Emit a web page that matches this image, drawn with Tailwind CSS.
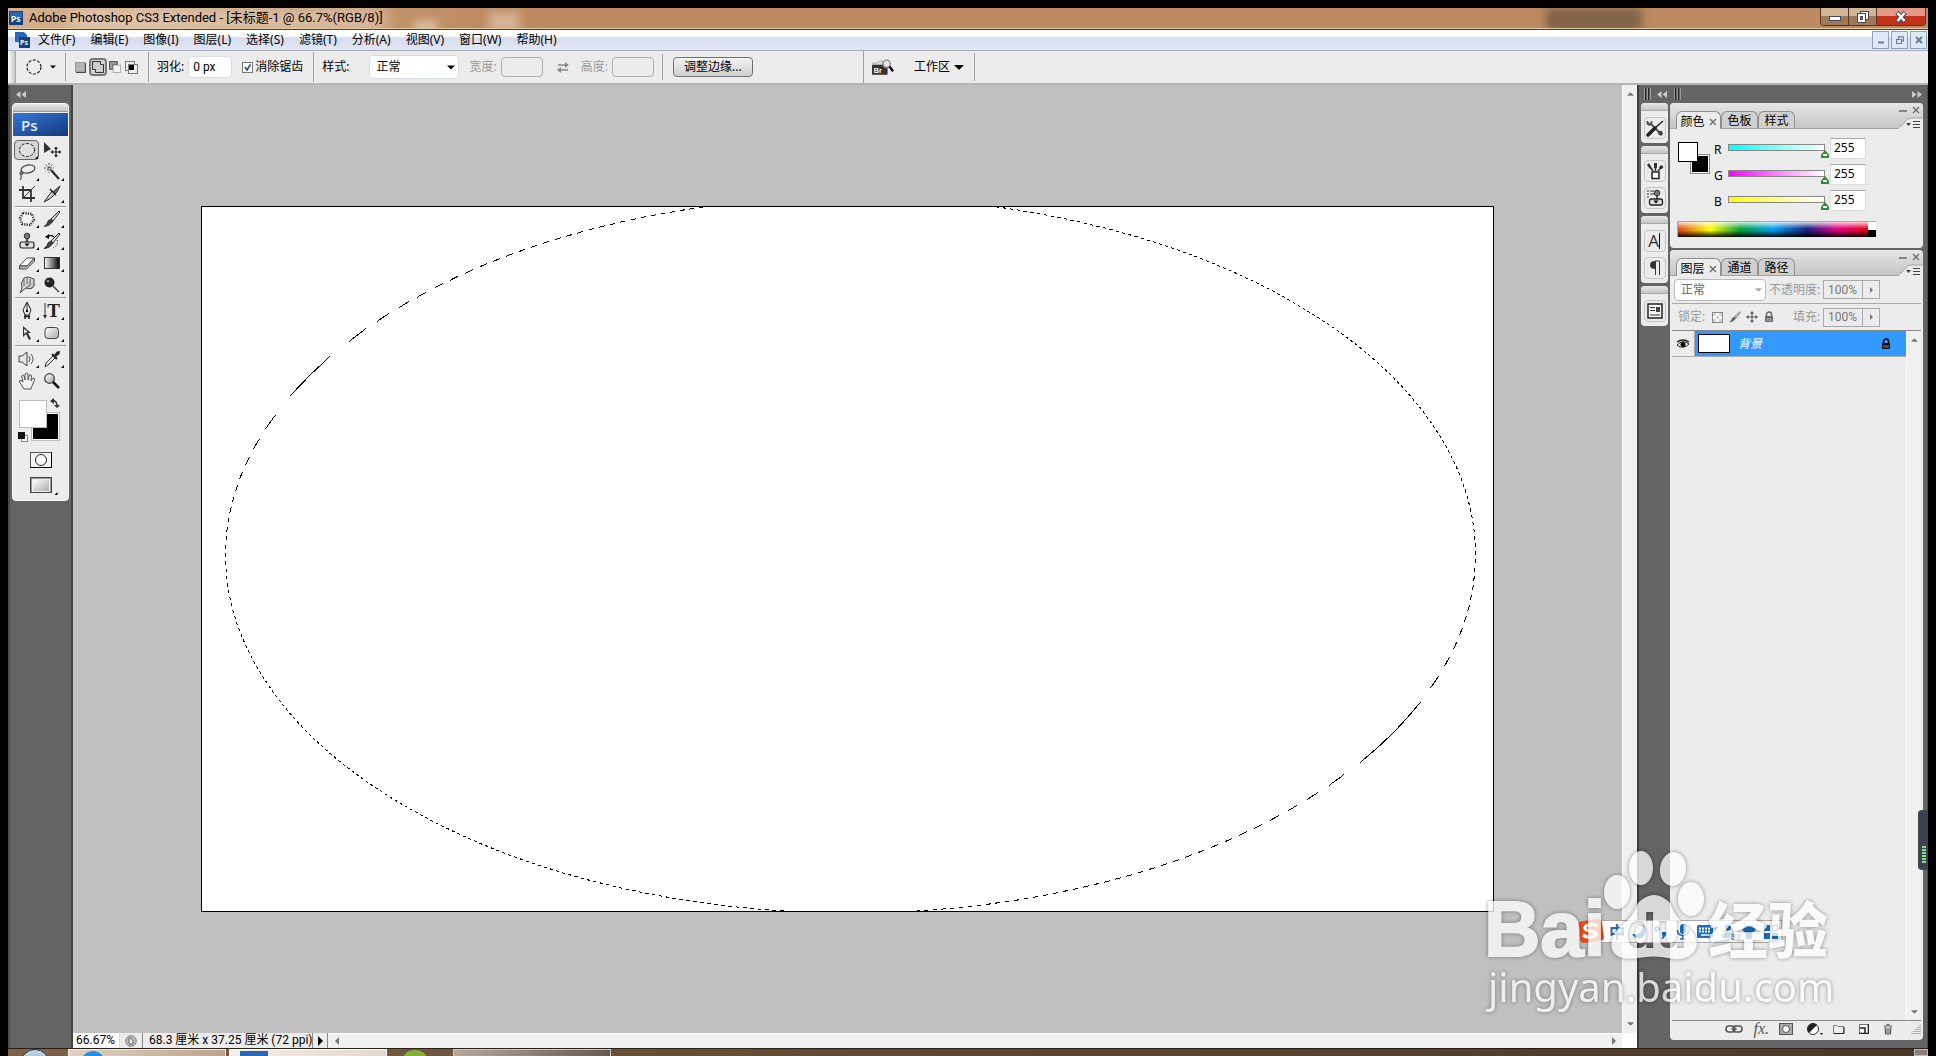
<!DOCTYPE html>
<html lang="zh-CN">
<head>
  <meta charset="UTF-8" />
  <meta name="viewport" content="width=device-width, initial-scale=1" />
  <title>Adobe Photoshop CS3 Extended</title>
  <script src="https://cdn.jsdelivr.net/npm/@tailwindcss/browser@4"></script>
</head>
<body class="bg-black h-screen overflow-hidden pt-2 pl-2 pr-2 flex flex-col relative text-[12px] leading-4 text-black font-['Noto_Sans','Noto_Sans_CJK_SC',sans-serif]">

  <!-- shared icons -->
  <svg class="absolute size-0">
    <symbol id="ps" viewBox="0 0 16 16">
      <rect width="16" height="16" fill="#15417f" />
      <rect x="1" y="1" width="14" height="7" fill="#2a66b4" />
      <text x="2" y="12" font-size="10" font-weight="bold" fill="#fff" font-family="Open Sans">Ps</text>
    </symbol>
    <symbol id="tri-up" viewBox="0 0 8 4"><path d="M0 4L4 0L8 4Z" /></symbol>
    <symbol id="tri-down" viewBox="0 0 8 4"><path d="M0 0L4 4L8 0Z" /></symbol>
    <symbol id="tri-left" viewBox="0 0 4 8"><path d="M4 0L0 4L4 8Z" /></symbol>
    <symbol id="tri-right" viewBox="0 0 4 8"><path d="M0 0L4 4L0 8Z" /></symbol>
    <symbol id="dbl-left" viewBox="0 0 10 7"><path d="M4.500 0L0 3.500L4.500 7ZM10 0L5.500 3.500L10 7Z" /></symbol>
    <symbol id="dbl-right" viewBox="0 0 10 7"><path d="M0 0L4.500 3.500L0 7ZM5.500 0L10 3.500L5.500 7Z" /></symbol>
    <symbol id="close" viewBox="0 0 8 8"><path d="M1 1L7 7M7 1L1 7" stroke="#666" stroke-width="1.200" fill="none" /></symbol>
    <symbol id="grip" viewBox="0 0 7 12"><path d="M1.500 0V12M4.500 0V12" stroke="#222" /><path d="M.5 0V12M3.500 0V12M6.500 0V12" stroke="#999" /></symbol>
    <symbol id="panel-menu" viewBox="0 0 24 12">
      <path d="M0 10C5 9 6 1 13 1H24V12H0Z" fill="#ececec" />
      <path d="M0 10C5 9 6 1 13 1H24" fill="none" stroke="#a5a5a5" />
      <path d="M7 6H12L9.500 9Z" fill="#444" />
      <path d="M14 4.500H21M14 7.500H21M14 10.500H21" stroke="#444" />
    </symbol>
    <symbol id="lock" viewBox="0 0 10 12"><path d="M2.500 5V3.500A2.500 2.500 0 0 1 7.500 3.500V5" fill="none" stroke="currentColor" stroke-width="1.500" /><rect x="1" y="5" width="8" height="6" rx="1" fill="currentColor" /><path d="M3 7V10M5 7V10M7 7V10" stroke="#fff" stroke-opacity=".6" /></symbol>
    <symbol id="brush" viewBox="0 0 18 18"><path d="M16 1L8 9L10 11L17 2Z" fill="#ddd" stroke="#222" /><path d="M8 9L10 11Q7 16 1 16.500Q5 14 5 11Z" fill="#444" stroke="#222" stroke-width=".8" /></symbol>
    <symbol id="stamp" viewBox="0 0 18 18"><circle cx="9" cy="4" r="2.800" fill="#777" stroke="#333" /><path d="M8 7H10L10.500 10H7.500Z" fill="#555" /><rect x="2" y="10" width="14" height="6" rx="2" fill="#e0e0e0" stroke="#222" stroke-width="1.200" /><path d="M6.500 11.500H11.500L9 14.500Z" fill="#000" /></symbol>
    <linearGradient id="metal" x1="0" y1="0" x2="1" y2="1"><stop offset="0" stop-color="#fff" /><stop offset="1" stop-color="#aaa" /></linearGradient>
    <linearGradient id="fade"><stop offset="0" stop-color="#fff" /><stop offset="1" stop-color="#000" /></linearGradient>
  </svg>

  <!-- title bar -->
  <header class="h-[21px] shrink-0 flex items-center pl-px bg-linear-to-r from-[#d3b08d] via-[#bd8b62] via-25% to-[#bd8b62] border-b border-[#e5c9a6] relative overflow-hidden">
    <div class="absolute left-[60px] top-0 w-80 h-6 rounded-full bg-[#eddbc8]/60 blur-sm"></div>
    <div class="absolute left-[406px] top-3 w-6 h-4 bg-[#e6cdb4]/70 blur-xs"></div>
    <div class="absolute left-[480px] top-1 w-8 h-5 bg-[#e6cdb4]/60 blur-xs"></div>
    <div class="absolute right-[286px] top-0 w-24 h-6 bg-[#806447] blur-xs"></div>
    <svg class="w-3.5 h-3.5 relative"><use href="#ps" /></svg>
    <h1 class="ml-1.5 text-[13px] font-['Roboto','Noto_Sans_CJK_SC',sans-serif] relative whitespace-nowrap">Adobe Photoshop CS3 Extended - [未标题-1 @ 66.7%(RGB/8)]</h1>
    <div class="ml-auto mr-0.5 self-start h-[18px] flex rounded-b border border-t-0 border-[#4f3a2c] overflow-hidden relative divide-x divide-[#4f3a2c]">
      <button aria-label="最小化" class="w-7 flex items-center justify-center bg-linear-to-b from-[#d3b596] from-50% to-[#a1795a] to-50%"><svg class="w-3 h-2" viewBox="0 0 12 8"><rect x=".5" y="3.500" width="11" height="4" fill="#fff" stroke="#444a5c" /></svg></button>
      <button aria-label="还原" class="w-7 flex items-center justify-center bg-linear-to-b from-[#d3b596] from-50% to-[#a1795a] to-50%"><svg class="w-3 h-3" viewBox="0 0 12 12"><rect x="3.500" y=".5" width="8" height="8" fill="#fff" stroke="#444a5c" /><rect x=".5" y="2.500" width="8" height="9" fill="#fff" stroke="#444a5c" /><rect x="3.500" y="5.500" width="2" height="3" fill="#a1795a" stroke="#444a5c" /></svg></button>
      <button aria-label="关闭" class="w-12 flex items-center justify-center bg-linear-to-b from-[#e29a86] from-50% to-[#c0321a] to-50%"><svg class="w-3 h-3" viewBox="0 0 12 12"><path d="M2 1.500L10 10.500M10 1.500L2 10.500" stroke="#444a5c" stroke-width="4.500" /><path d="M2.500 2L9.500 10M9.500 2L2.500 10" stroke="#fff" stroke-width="2.500" /></svg></button>
    </div>
  </header>

  <!-- menu bar -->
  <nav class="h-[21px] shrink-0 flex items-center gap-[15px] pl-[30px] relative border-t border-[#4b4038] bg-linear-to-b from-white from-30% via-[#d5dcee] via-40% to-[#e2e8f5] text-[12px] whitespace-nowrap">
    <svg class="absolute left-1.5 top-0.5 w-[17px] h-4" viewBox="0 0 17 16"><path d="M1 0H10L13 3V10H1Z" fill="#2a66b4" /><rect x="5" y="5" width="11" height="11" fill="#15417f" /><text x="6" y="13" font-size="7" font-weight="bold" fill="#fff" font-family="Open Sans">Ps</text></svg>
    <a href="#">文件(F)</a>
    <a href="#">编辑(E)</a>
    <a href="#">图像(I)</a>
    <a href="#">图层(L)</a>
    <a href="#">选择(S)</a>
    <a href="#">滤镜(T)</a>
    <a href="#">分析(A)</a>
    <a href="#">视图(V)</a>
    <a href="#">窗口(W)</a>
    <a href="#">帮助(H)</a>
    <div class="ml-auto mr-px flex gap-0.5">
      <button aria-label="最小化文档" class="w-[17px] h-[18px] border border-[#8ba2bd] bg-[#dde9f6] flex items-center justify-center"><svg class="w-2 h-2" viewBox="0 0 8 8"><path d="M1 6.500H7" stroke="#6b7c92" stroke-width="2" /></svg></button>
      <button aria-label="还原文档" class="w-[17px] h-[18px] border border-[#8ba2bd] bg-[#dde9f6] flex items-center justify-center"><svg class="w-2 h-2" viewBox="0 0 8 8"><path d="M2.500 3V.8H7.500V5H6M.5 3.500H5.500V7.500H.5Z" fill="none" stroke="#6b7c92" stroke-width="1.200" /></svg></button>
      <button aria-label="关闭文档" class="w-[17px] h-[18px] border border-[#8ba2bd] bg-[#dde9f6] flex items-center justify-center"><svg class="w-2 h-2" viewBox="0 0 8 8"><path d="M1 1L7 7M7 1L1 7" stroke="#6b7c92" stroke-width="2" /></svg></button>
    </div>
  </nav>

  <!-- options bar -->
  <section class="h-[35px] shrink-0 flex items-center bg-[#ececec] border-t border-b-2 border-t-[#a9adb8] border-b-[#b4b4b4] whitespace-nowrap">
    <div class="w-2 self-stretch bg-linear-to-r from-white to-[#c8c8c8] border-r border-[#aaa]"></div>
    <button aria-label="椭圆选框工具" class="w-[50px] h-7 border-r border-[#a0a0a0] flex items-center pl-2.5">
      <svg class="w-4 h-4" viewBox="0 0 16 16"><circle cx="8" cy="8" r="7" fill="none" stroke="#222" stroke-width="1.200" stroke-dasharray="3 1.500" /></svg>
      <svg class="w-1.5 h-1 ml-2"><use href="#tri-down" /></svg>
    </button>
    <div class="w-[83px] h-[30px] border-r border-[#a0a0a0] flex items-center pl-2">
      <button aria-label="新选区" class="w-[15px]"><svg class="w-[11px] h-[11px] ml-px" viewBox="0 0 12 12"><rect x=".5" y=".5" width="10" height="10" fill="#b5b5b5" stroke="#999" /><path d="M11.500 1V11.500H1" fill="none" stroke="#333" /></svg></button>
      <button aria-label="添加到选区" class="w-[18px] h-[18px] rounded border-2 border-[#777] bg-[#d5d5d5] flex items-center justify-center"><svg class="w-3 h-3" viewBox="0 0 12 12"><path d="M.5 .5H8.500V3.500H11.500V11.500H3.500V8.500H.5Z" fill="#ccc" stroke="#333" /></svg></button>
      <button aria-label="从选区减去" class="w-4"><svg class="w-3 h-3 ml-0.5" viewBox="0 0 13 13"><path d="M.5 .5H9V4H4V9H.5Z" fill="#999" stroke="#444" /><rect x="4.500" y="4.500" width="8" height="8" fill="#f4f4f4" stroke="#aaa" /></svg></button>
      <button aria-label="与选区交叉" class="w-4"><svg class="w-[13px] h-[13px] ml-0.5" viewBox="0 0 13 13"><rect x=".5" y=".5" width="9" height="9" fill="#eee" stroke="#777" /><rect x="3.500" y="3.500" width="9" height="9" fill="#eee" stroke="#777" /><rect x="4" y="4" width="5" height="5" fill="#000" /></svg></button>
    </div>
    <label for="feather" class="ml-2">羽化:</label>
    <input id="feather" value="0 px" class="ml-1 w-11 h-[22px] bg-white border border-[#d8dce4] px-1 rounded-sm font-['Roboto',sans-serif]" />
    <input id="antialias" type="checkbox" checked class="peer sr-only" />
    <label for="antialias" class="ml-2.5 flex items-center gap-0.5">
      <svg class="w-[11px] h-[11px]" viewBox="0 0 11 11"><rect x=".5" y=".5" width="10" height="10" fill="#fff" stroke="#777" /><path d="M3 5L5 8L8.500 2.500" fill="none" stroke="#2a4b94" stroke-width="1.600" /></svg>消除锯齿
    </label>
    <div class="ml-2.5 h-[30px] border-l border-[#a0a0a0]"></div>
    <label for="style" class="ml-2">样式:</label>
    <div class="relative ml-5">
      <select id="style" class="appearance-none w-[90px] h-6 bg-white border border-[#d8dce4] rounded-sm px-1.5"><option>正常</option></select>
      <svg class="absolute right-1 top-2.5 w-2 h-[5px] pointer-events-none" preserveAspectRatio="none"><use href="#tri-down" /></svg>
    </div>
    <label for="sel-width" class="ml-2.5 text-[#9b9b9b]">宽度:</label>
    <input id="sel-width" disabled class="ml-1 w-[42px] h-5 border border-[#b0b0b0] rounded-sm bg-[#ececec]" />
    <svg class="w-3 h-3 ml-3.5" viewBox="0 0 12 12"><path d="M1 4H9M3 9H11" stroke="#888" stroke-width="1.500" /><path d="M8 1L12 4L8 7ZM4 6L0 9L4 12Z" fill="#888" /></svg>
    <label for="sel-height" class="ml-3 text-[#9b9b9b]">高度:</label>
    <input id="sel-height" disabled class="ml-1 w-[42px] h-5 border border-[#b0b0b0] rounded-sm bg-[#ececec]" />
    <div class="ml-2 h-[26px] border-l border-[#a0a0a0]"></div>
    <button class="ml-2.5 w-20 h-5 rounded-sm border border-[#707070] bg-linear-to-b from-[#f4f4f4] to-[#cfcfcf] leading-4">调整边缘...</button>
    <div class="ml-[110px] self-stretch border-l border-[#a0a0a0]"></div>
    <button aria-label="转到 Bridge" class="ml-2"><svg class="w-[22px] h-[17px]" viewBox="0 0 24 18"><path d="M1 4H6L8 2H12V7H1Z" fill="#ddd" stroke="#999" stroke-width=".8" /><rect y="6" width="17" height="11" rx="1" fill="#333" /><text x="2" y="15" font-size="8" font-weight="bold" fill="#fff" font-family="Liberation Sans">Br</text><circle cx="16" cy="5" r="4" fill="#e6e6e6" stroke="#888" stroke-width="1.500" /><path d="M19 8L23 13" stroke="#000" stroke-width="2.500" /></svg></button>
    <button class="ml-5 flex items-center gap-1">工作区<svg class="w-2.5 h-[5px]"><use href="#tri-down" /></svg></button>
    <div class="ml-2.5 h-[28px] border-l border-[#a0a0a0]"></div>
  </section>

  <main class="flex-1 min-h-0 flex bg-[#646464]">

    <!-- tool box -->
    <aside class="w-[65px] shrink-0 border-2 border-y-0 border-[#4a4a4a] border-r-[#444] pl-0.5 pr-0.5 flex flex-col">
      <div class="h-[18px] flex items-center pl-1"><svg class="w-2.5 h-[7px] fill-[#ccc]"><use href="#dbl-left" /></svg></div>
      <div class="w-[57px] bg-[#ececec] rounded-sm border border-[#f8f8f8] h-[398px] flex flex-col">
        <div class="h-2 bg-linear-to-b from-[#e8e8e8] to-[#c4c4c4] border-b border-[#999]"></div>
        <div class="mt-px h-[23px] bg-linear-to-br from-[#3877dc] to-[#123a78] text-[#e8f0fc] text-[15px] leading-6 font-semibold pl-2 font-['Open_Sans',sans-serif]">Ps</div>
        <div class="mt-[3px] ml-px grid grid-cols-[25px_25px] auto-rows-[22px]">
          <button aria-label="椭圆选框" class="relative flex items-center justify-center h-5 mt-px rounded border border-[#666] bg-[#d4d4d4]"><svg class="w-4 h-4" viewBox="0 0 16 16"><ellipse cx="8" cy="8" rx="7.500" ry="6.500" fill="#e2e2e2" stroke="#222" stroke-dasharray="3 1.500" /></svg><i class="absolute right-0 bottom-0 size-[3px] bg-black [clip-path:polygon(100%_0,100%_100%,0_100%)]"></i></button>
          <button aria-label="移动" class="flex items-center justify-center"><svg class="w-[18px] h-[18px]" viewBox="0 0 18 18"><path d="M1 1V12L8 8Z" fill="#333" /><path d="M13 6V16M8 11H18" stroke="#222" stroke-width="1.200" /><path d="M11 8L13 5.500L15 8ZM11 14L13 16.500L15 14ZM10 9L7.500 11L10 13ZM16 9L18 11L16 13Z" fill="#222" /></svg></button>
          <button aria-label="套索" class="relative flex items-center justify-center"><svg class="w-[18px] h-[18px]" viewBox="0 0 18 18"><ellipse cx="10" cy="6" rx="7" ry="4" fill="none" stroke="#444" stroke-width="1.200" transform="rotate(-12 10 6)" /><path d="M4 8Q1 9 2 11Q5 13 5 10Q2 9 3 13Q4 15 2 17" fill="none" stroke="#333" /></svg><i class="absolute right-0 bottom-0.5 size-[3px] bg-black [clip-path:polygon(100%_0,100%_100%,0_100%)]"></i></button>
          <button aria-label="魔棒" class="relative flex items-center justify-center"><svg class="w-[18px] h-[18px]" viewBox="0 0 18 18"><path d="M6 0V10M1 5H11M2.500 1.500L9.500 8.500M9.500 1.500L2.500 8.500" stroke="#555" stroke-dasharray="2 1" /><path d="M8 7L16 16" stroke="#222" stroke-width="2" /></svg><i class="absolute right-0 bottom-0.5 size-[3px] bg-black [clip-path:polygon(100%_0,100%_100%,0_100%)]"></i></button>
          <button aria-label="裁剪" class="flex items-center justify-center"><svg class="w-[18px] h-[18px]" viewBox="0 0 18 18"><path d="M5 1V13H17M1 5H13V17" fill="none" stroke="#333" stroke-width="1.800" /><path d="M6 12L17 1" stroke="#333" /></svg></button>
          <button aria-label="切片" class="relative flex items-center justify-center"><svg class="w-[18px] h-[18px]" viewBox="0 0 18 18"><path d="M10 7L17 1L14 7L12 9Z" fill="#777" stroke="#222" /><path d="M1 17L9 6L12 9Q8 14 1 17Z" fill="#ccc" stroke="#222" /><path d="M7 4L13 10" stroke="#222" stroke-width="1.500" /></svg><i class="absolute right-0 bottom-0.5 size-[3px] bg-black [clip-path:polygon(100%_0,100%_100%,0_100%)]"></i></button>
        </div>
        <hr class="h-0.5 mx-0.5 mt-px border-0 border-t border-[#999] bg-white" />
        <div class="ml-px grid grid-cols-[25px_25px] auto-rows-[22px]">
          <button aria-label="修补" class="relative flex items-center justify-center"><svg class="w-[18px] h-[18px]" viewBox="0 0 18 18"><path d="M5 3L14 4L16 10L12 15L4 14L2 8Z" fill="#f4f4f4" stroke="#333" stroke-width="2.500" stroke-dasharray="1.200 1.200" /></svg><i class="absolute right-0 bottom-0.5 size-[3px] bg-black [clip-path:polygon(100%_0,100%_100%,0_100%)]"></i></button>
          <button aria-label="画笔" class="relative flex items-center justify-center"><svg class="w-[18px] h-[18px]"><use href="#brush" /></svg><i class="absolute right-0 bottom-0.5 size-[3px] bg-black [clip-path:polygon(100%_0,100%_100%,0_100%)]"></i></button>
          <button aria-label="仿制图章" class="relative flex items-center justify-center"><svg class="w-[18px] h-[18px]"><use href="#stamp" /></svg><i class="absolute right-0 bottom-0.5 size-[3px] bg-black [clip-path:polygon(100%_0,100%_100%,0_100%)]"></i></button>
          <button aria-label="历史记录画笔" class="relative flex items-center justify-center"><svg class="w-[18px] h-[18px]" viewBox="0 0 18 18"><path d="M16 1L8 9L10 11L17 2Z" fill="#ddd" stroke="#222" /><path d="M8 9L10 11Q7 16 1 16.500Q5 14 5 11Z" fill="#444" stroke="#222" /><path d="M4 5Q8 2 11 5" fill="none" stroke="#111" stroke-width="1.500" /><path d="M2 5L6 2V7Z" /><path d="M14 8Q16 13 10 16" fill="none" stroke="#333" stroke-dasharray="1.500 1.500" /></svg><i class="absolute right-0 bottom-0.5 size-[3px] bg-black [clip-path:polygon(100%_0,100%_100%,0_100%)]"></i></button>
          <button aria-label="橡皮擦" class="relative flex items-center justify-center"><svg class="w-[18px] h-[18px]" viewBox="0 0 18 18"><path d="M1.500 12L9 4H16.500L9 12Z" fill="#fff" stroke="#444" /><path d="M1.500 12V15H8.500L16.500 7V4L9 12Z" fill="#bbb" stroke="#444" /></svg><i class="absolute right-0 bottom-0.5 size-[3px] bg-black [clip-path:polygon(100%_0,100%_100%,0_100%)]"></i></button>
          <button aria-label="渐变" class="relative flex items-center justify-center"><svg class="w-4 h-3" viewBox="0 0 16 12"><rect x=".5" y=".5" width="15" height="11" fill="url(#fade)" stroke="#333" /></svg><i class="absolute right-0 bottom-0.5 size-[3px] bg-black [clip-path:polygon(100%_0,100%_100%,0_100%)]"></i></button>
          <button aria-label="涂抹" class="relative flex items-center justify-center"><svg class="w-[18px] h-[18px]" viewBox="0 0 18 18"><path d="M2 17L4 12Q2 7 6 2L10 1L16 3V10Q14 14 8 12L4 15Z" fill="url(#metal)" stroke="#444" /><path d="M6 3V10M9 2V8M12 3V9L8 12" fill="none" stroke="#555" /></svg><i class="absolute right-0 bottom-0.5 size-[3px] bg-black [clip-path:polygon(100%_0,100%_100%,0_100%)]"></i></button>
          <button aria-label="加深" class="relative flex items-center justify-center"><svg class="w-[18px] h-[18px]" viewBox="0 0 18 18"><circle cx="6.500" cy="6.500" r="5" fill="#222" /><circle cx="5" cy="5" r="1.500" fill="#888" /><path d="M10 10L16 16" stroke="#444" stroke-width="1.500" /></svg><i class="absolute right-0 bottom-0.5 size-[3px] bg-black [clip-path:polygon(100%_0,100%_100%,0_100%)]"></i></button>
        </div>
        <hr class="h-0.5 mx-0.5 my-px border-0 border-t border-[#999] bg-white" />
        <div class="ml-px grid grid-cols-[25px_25px] auto-rows-[22px]">
          <button aria-label="钢笔" class="relative flex items-center justify-center"><svg class="w-[18px] h-[18px]" viewBox="0 0 18 18"><path d="M9 0L13 8L11 13H7L5 8Z" fill="#f0f0f0" stroke="#222" /><path d="M9 1V8" stroke="#222" /><circle cx="9" cy="9" r="1.200" /><path d="M6 14.500H12M7 13V17M11 13V17" stroke="#222" stroke-width="1.500" /></svg><i class="absolute right-0 bottom-0.5 size-[3px] bg-black [clip-path:polygon(100%_0,100%_100%,0_100%)]"></i></button>
          <button aria-label="直排文字" class="relative flex items-center justify-center text-[19px] font-['Liberation_Serif',serif] font-bold text-[#222]"><svg class="w-1 h-4" viewBox="0 0 4 16"><path d="M2 0V14" stroke="#333" /><path d="M0 12H4L2 16Z" fill="#333" /></svg>T<i class="absolute right-0 bottom-0.5 size-[3px] bg-black [clip-path:polygon(100%_0,100%_100%,0_100%)]"></i></button>
          <button aria-label="路径选择" class="relative flex items-center justify-center"><svg class="w-[18px] h-[18px]" viewBox="0 0 18 18"><path d="M5 2V13L8 10L11 16L13 15L10 9H13Z" fill="#333" /><path d="M6 5V10L8 8L9 9V7Z" fill="#eee" /></svg><i class="absolute right-0 bottom-0.5 size-[3px] bg-black [clip-path:polygon(100%_0,100%_100%,0_100%)]"></i></button>
          <button aria-label="圆角矩形" class="relative flex items-center justify-center"><svg class="w-4 h-3" viewBox="0 0 16 12"><rect x="1" y=".5" width="13.500" height="11" rx="3" fill="url(#metal)" stroke="#444" /></svg><i class="absolute right-0 bottom-0.5 size-[3px] bg-black [clip-path:polygon(100%_0,100%_100%,0_100%)]"></i></button>
        </div>
        <hr class="h-0.5 mx-0.5 my-px border-0 border-t border-[#999] bg-white" />
        <div class="ml-px grid grid-cols-[25px_25px] auto-rows-[22px]">
          <button aria-label="语音注释" class="relative flex items-center justify-center"><svg class="w-[18px] h-[18px]" viewBox="0 0 18 18"><path d="M1 6H4L9 2V16L4 12H1Z" fill="#e6e6e6" stroke="#444" /><path d="M11 6Q13 9 11 12M13 4Q17 9 13 14" fill="none" stroke="#555" /></svg><i class="absolute right-0 bottom-0.5 size-[3px] bg-black [clip-path:polygon(100%_0,100%_100%,0_100%)]"></i></button>
          <button aria-label="吸管" class="relative flex items-center justify-center"><svg class="w-[18px] h-[18px]" viewBox="0 0 18 18"><path d="M2 17L3 13L10 6L12 8L5 15Z" fill="#eee" stroke="#333" /><path d="M9 4L14 9" stroke="#222" stroke-width="2" /><path d="M11 5L14 1.500L17 1L16.500 4L13 7Z" fill="#222" /></svg><i class="absolute right-0 bottom-0.5 size-[3px] bg-black [clip-path:polygon(100%_0,100%_100%,0_100%)]"></i></button>
          <button aria-label="抓手" class="flex items-center justify-center"><svg class="w-[18px] h-[18px]" viewBox="0 0 18 18"><path d="M6 17L1.500 10Q1 8 3 8.500L5 10L3.500 4Q4.500 2 6 4L7 8V2Q8.500 0 10 2V8L11.500 3Q13 2 13.500 4L13 9L15 6Q17 6 16.500 8L14 14L13 17Z" fill="#f2f2f2" stroke="#555" /></svg></button>
          <button aria-label="缩放" class="flex items-center justify-center"><svg class="w-[18px] h-[18px]" viewBox="0 0 18 18"><circle cx="6.500" cy="6.500" r="4.800" fill="url(#metal)" stroke="#444" stroke-width="1.300" /><path d="M10 10L16 16" stroke="#111" stroke-width="2.500" /></svg></button>
        </div>
        <div class="relative h-[50px] mt-1">
          <button aria-label="背景色" class="absolute left-[18px] top-4 size-[29px] bg-black border border-[#bbb] outline outline-white -outline-offset-2"></button>
          <button aria-label="前景色" class="absolute left-1.5 top-1 size-7 bg-white border border-[#bbb]"></button>
          <svg class="absolute left-[37px] top-0.5 w-2.5 h-2.5" viewBox="0 0 10 10"><path d="M2 3Q7 2 7 8" fill="none" stroke="#333" stroke-width="1.500" /><path d="M0 3L4 0V6ZM4 7H10L7 10Z" fill="#333" /></svg>
          <svg class="absolute left-[5px] top-9 w-2.5 h-2.5" viewBox="0 0 10 10"><rect x="3.500" y="3.500" width="6" height="6" fill="#fff" stroke="#888" /><rect width="7" height="7" fill="#111" /></svg>
        </div>
        <div class="flex flex-col items-center mt-1.5 gap-[9px]">
          <button aria-label="快速蒙版" class="w-[22px] h-4"><svg class="w-[22px] h-4" viewBox="0 0 22 16"><rect x=".5" y=".5" width="21" height="15" fill="#f4f4f4" stroke="#555" /><path d="M21.500 0V15.500H0" fill="none" stroke="#000" /><circle cx="11" cy="8" r="5.500" fill="#fff" stroke="#222" /></svg></button>
          <button aria-label="屏幕模式" class="relative w-[22px] h-4"><svg class="w-[22px] h-4" viewBox="0 0 22 16"><rect x=".5" y=".5" width="21" height="15" fill="#999" stroke="#444" /><rect x="2.500" y="2.500" width="17" height="12" fill="url(#metal)" stroke="#eee" /></svg><i class="absolute -right-1.5 -bottom-0.5 size-[3px] bg-black [clip-path:polygon(100%_0,100%_100%,0_100%)]"></i></button>
        </div>
      </div>
    </aside>

    <!-- document window -->
    <section class="flex-1 min-w-0 flex flex-col">
      <div class="flex-1 min-h-0 flex">
        <div class="flex-1 min-w-0 bg-[#c0c0c0] flex items-center justify-center overflow-hidden">
          <svg class="w-[1293px] max-w-full h-auto" viewBox="201 206 1293 706">
            <defs>
              <linearGradient id="ants" gradientUnits="userSpaceOnUse" spreadMethod="repeat" x1="1.250" y1="1.250" x2="5.250" y2="5.250">
                <stop offset=".5" stop-color="#000" />
                <stop offset=".5" stop-color="#fff" />
              </linearGradient>
            </defs>
            <rect x="201" y="206" width="1293" height="706" fill="#fff" />
            <ellipse cx="850.500" cy="555" rx="625" ry="358" fill="none" stroke="url(#ants)" stroke-width="1" shape-rendering="crispEdges" />
            <rect x="201.500" y="206.500" width="1292" height="705" fill="none" stroke="#000" />
          </svg>
        </div>
        <div class="w-[15px] bg-[#f0f0f0] border-l border-white flex flex-col justify-between items-center py-[7px]">
          <svg class="w-[7px] h-1 fill-[#777]"><use href="#tri-up" /></svg>
          <svg class="w-[7px] h-1 fill-[#777]"><use href="#tri-down" /></svg>
        </div>
      </div>
      <div class="h-[15px] shrink-0 flex items-stretch bg-[#ececec] leading-[15px] whitespace-nowrap font-['Roboto','Noto_Sans_CJK_SC',sans-serif] text-[12px]">
        <input aria-label="缩放比例" value="66.67%" class="w-[47px] bg-white pl-[3px] border-r border-[#ddd]" />
        <div class="w-[23px] flex items-center justify-center border-r border-[#888]"><svg class="w-3 h-3" viewBox="0 0 12 12"><circle cx="6" cy="6" r="5.300" fill="#bbb" stroke="#888" /><path d="M4 3V9H8V6L6 3Z" fill="#eee" stroke="#666" /></svg></div>
        <div class="w-[170px] pl-1.5 border-r border-[#888]">68.3 厘米 x 37.25 厘米 (72 ppi)</div>
        <button aria-label="状态栏菜单" class="w-[15px] flex items-center justify-center border-r border-[#888]"><svg class="w-[5px] h-2.5" viewBox="0 0 5 10"><path d="M0 0L5 5L0 10Z" /></svg></button>
        <div class="flex-1 bg-[#f0f0f0] border-t border-white flex items-center justify-between pl-[7px] pr-1.5">
          <svg class="w-1 h-2 fill-[#777]"><use href="#tri-left" /></svg>
          <svg class="w-1 h-2 fill-[#777]"><use href="#tri-right" /></svg>
        </div>
        <div class="w-[15px] bg-white"></div>
      </div>
    </section>

    <!-- collapsed panels -->
    <aside class="w-[33px] shrink-0 border-l-2 border-[#3c3c3c] flex flex-col pl-0.5">
      <div class="h-[18px] flex items-center gap-1.5 pl-[3px]">
        <svg class="w-[7px] h-3"><use href="#grip" /></svg>
        <svg class="w-2.5 h-[7px] fill-[#ccc]"><use href="#dbl-left" /></svg>
      </div>
      <div class="flex flex-col gap-[3px] w-[27px]">
        <div class="bg-[#ececec] rounded-sm pb-1 flex flex-col items-center">
          <div class="h-2 w-full rounded-t-sm bg-linear-to-b from-[#e8e8e8] to-[#c4c4c4] border-b border-[#aaa] mb-1.5"></div>
          <button aria-label="工具预设" class="size-[22px] rounded border border-[#c4c4c4] flex items-center justify-center"><svg class="w-[18px] h-[18px]" viewBox="0 0 18 18"><path d="M4 4L14 14" stroke="#555" stroke-width="2" /><path d="M1 2L4 5L6 2Q6 5 5 6Q2 7 1 5Z" fill="#555" stroke="#555" /><path d="M12 12L16 12L17 15L15 17L12 15Z" fill="#444" /><path d="M17 2L9 9" stroke="#222" stroke-width="1.500" /><path d="M9 9L2 16" stroke="#222" stroke-width="3.500" stroke-linecap="round" /></svg></button>
        </div>
        <div class="bg-[#ececec] rounded-sm pb-1 flex flex-col items-center">
          <div class="h-2 w-full rounded-t-sm bg-linear-to-b from-[#e8e8e8] to-[#c4c4c4] border-b border-[#aaa] mb-1.5"></div>
          <button aria-label="画笔面板" class="size-[22px] rounded border border-[#c4c4c4] flex items-center justify-center"><svg class="w-[18px] h-[18px]" viewBox="0 0 18 18"><rect x="6" y="10" width="7" height="6.500" fill="#fff" stroke="#222" stroke-width="1.500" /><path d="M7 9L3 3M9.500 9V2M12 9L16 5" stroke="#333" stroke-width="1.500" /><path d="M1 3L3 1L6 7L4 7ZM8 1H11V6H8ZM13 6Q14 2 17 4Q18 7 14 7Z" fill="#333" /></svg></button>
          <button aria-label="仿制源" class="mt-[5px] size-[22px] rounded border border-[#c4c4c4] flex items-center justify-center"><svg class="w-[18px] h-[18px]" viewBox="0 0 18 18"><path d="M1 2H3M4 2H8M1 5H3M4 5H8M1 8H3" stroke="#333" stroke-width="1.200" /><circle cx="11" cy="4" r="2.800" fill="#777" stroke="#333" /><path d="M10 7H12V10H10Z" fill="#555" /><rect x="3.500" y="10" width="13" height="6" rx="2" fill="#ddd" stroke="#222" stroke-width="1.300" /><path d="M7.500 11.500H12.500L10 14.500Z" /></svg></button>
        </div>
        <div class="bg-[#ececec] rounded-sm pb-1 flex flex-col items-center">
          <div class="h-2 w-full rounded-t-sm bg-linear-to-b from-[#e8e8e8] to-[#c4c4c4] border-b border-[#aaa] mb-1.5"></div>
          <button aria-label="字符" class="size-[22px] rounded border border-[#c4c4c4] flex items-center justify-center text-[17px] leading-5 text-[#333] font-['Open_Sans',sans-serif]">A<svg class="w-0.5 h-4"><rect width="1" height="16" fill="#000" /></svg></button>
          <button aria-label="段落" class="mt-[5px] size-[22px] rounded border border-[#c4c4c4] flex items-center justify-center"><svg class="w-3 h-4" viewBox="0 0 12 16"><path d="M6 1H10M6.500 1V15M10.500 1V15" stroke="#333" /><path d="M6 1V9Q1 9 1 5Q1 1 6 1Z" fill="#333" /></svg></button>
        </div>
        <div class="bg-[#ececec] rounded-sm pb-1 flex flex-col items-center">
          <div class="h-2 w-full rounded-t-sm bg-linear-to-b from-[#e8e8e8] to-[#c4c4c4] border-b border-[#aaa] mb-1.5"></div>
          <button aria-label="图层复合" class="size-[22px] rounded border border-[#c4c4c4] flex items-center justify-center"><svg class="w-4 h-4" viewBox="0 0 16 16"><rect x="1" y="1" width="14" height="14" fill="#f6f6f6" stroke="#222" stroke-width="1.500" /><path d="M3 4.500H8M3 7.500H8M3 12H13" stroke="#333" stroke-width="1.200" /><rect x="9" y="4" width="4" height="5" fill="#444" /></svg></button>
        </div>
      </div>
    </aside>

    <!-- expanded panels -->
    <aside class="w-[258px] shrink-0 flex flex-col pr-1 pb-2 border-r border-[#4a4a4a]">
      <div class="h-[18px] shrink-0 flex items-center justify-between pl-1 pr-px">
        <svg class="w-[7px] h-3"><use href="#grip" /></svg>
        <svg class="w-2.5 h-[7px] fill-[#ccc]"><use href="#dbl-right" /></svg>
      </div>

      <div class="bg-[#ececec] rounded-sm h-[145px] shrink-0">
        <div class="h-[26px] flex items-end pl-1.5 relative rounded-t-sm bg-linear-to-b from-[#e6e6e6] to-[#c6c6c6] border-b border-[#a5a5a5]">
          <button class="w-[45px] h-[18px] -mb-px pt-0.5 flex items-center justify-center gap-1 rounded-t-md border border-b-0 border-[#909090] bg-[#ececec]">颜色<svg class="w-2 h-2"><use href="#close" /></svg></button>
          <button class="w-[37px] h-[17px] pt-0.5 flex items-center justify-center rounded-t-md border border-b-0 border-[#909090] bg-[#d0d0d0]">色板</button>
          <button class="w-[37px] h-[17px] pt-0.5 flex items-center justify-center rounded-t-md border border-b-0 border-[#909090] bg-[#d0d0d0]">样式</button>
          <svg class="absolute right-4 top-1.5 w-2 h-2 stroke-[#666]" viewBox="0 0 8 8"><path d="M0 2H8" stroke-width="1.500" /></svg>
          <svg class="absolute right-[3px] top-[3px] w-2 h-2"><use href="#close" /></svg>
          <svg class="absolute right-0 -bottom-px w-6 h-3"><use href="#panel-menu" /></svg>
        </div>
        <div class="flex pl-2 pt-[9px]">
          <div class="relative w-8 h-9 mt-1 shrink-0">
            <button aria-label="背景色" class="absolute left-3 top-3 size-5 bg-black border border-[#888] outline outline-white -outline-offset-2"></button>
            <button aria-label="前景色" class="absolute left-0 top-0 size-5 bg-white border border-black"></button>
          </div>
          <div class="pl-1 grid grid-cols-[14px_102px_36px] auto-rows-[21px] gap-y-[5px] items-start">
            <label for="red" class="mt-1">R</label>
            <input id="red" type="range" min="0" max="255" value="255" class="appearance-none bg-transparent w-[101px] h-[15px] mt-1.5 [&::-webkit-slider-runnable-track]:h-[15px] [&::-webkit-slider-runnable-track]:[background:linear-gradient(to_right,#0ff,#fff)_1px_1px/95px_5px_no-repeat,linear-gradient(#888,#888)_0_0/97px_7px_no-repeat] [&::-webkit-slider-thumb]:appearance-none [&::-webkit-slider-thumb]:size-2 [&::-webkit-slider-thumb]:mt-1.5 [&::-webkit-slider-thumb]:[background:linear-gradient(#fff,#fff)_2px_4px/4px_2px_no-repeat,#2f8a3c] [&::-webkit-slider-thumb]:[clip-path:polygon(50%_0,100%_60%,100%_100%,0_100%,0_60%)]" />
            <input aria-label="红" value="255" class="w-9 h-[21px] pb-0.5 bg-white border border-[#ddd] border-t-[#aaa] px-[3px]" />
            <label for="green" class="mt-1">G</label>
            <input id="green" type="range" min="0" max="255" value="255" class="appearance-none bg-transparent w-[101px] h-[15px] mt-1.5 [&::-webkit-slider-runnable-track]:h-[15px] [&::-webkit-slider-runnable-track]:[background:linear-gradient(to_right,#f0f,#fff)_1px_1px/95px_5px_no-repeat,linear-gradient(#888,#888)_0_0/97px_7px_no-repeat] [&::-webkit-slider-thumb]:appearance-none [&::-webkit-slider-thumb]:size-2 [&::-webkit-slider-thumb]:mt-1.5 [&::-webkit-slider-thumb]:[background:linear-gradient(#fff,#fff)_2px_4px/4px_2px_no-repeat,#2f8a3c] [&::-webkit-slider-thumb]:[clip-path:polygon(50%_0,100%_60%,100%_100%,0_100%,0_60%)]" />
            <input aria-label="绿" value="255" class="w-9 h-[21px] pb-0.5 bg-white border border-[#ddd] border-t-[#aaa] px-[3px]" />
            <label for="blue" class="mt-1">B</label>
            <input id="blue" type="range" min="0" max="255" value="255" class="appearance-none bg-transparent w-[101px] h-[15px] mt-1.5 [&::-webkit-slider-runnable-track]:h-[15px] [&::-webkit-slider-runnable-track]:[background:linear-gradient(to_right,#ff0,#fff)_1px_1px/95px_5px_no-repeat,linear-gradient(#888,#888)_0_0/97px_7px_no-repeat] [&::-webkit-slider-thumb]:appearance-none [&::-webkit-slider-thumb]:size-2 [&::-webkit-slider-thumb]:mt-1.5 [&::-webkit-slider-thumb]:[background:linear-gradient(#fff,#fff)_2px_4px/4px_2px_no-repeat,#2f8a3c] [&::-webkit-slider-thumb]:[clip-path:polygon(50%_0,100%_60%,100%_100%,0_100%,0_60%)]" />
            <input aria-label="蓝" value="255" class="w-9 h-[21px] pb-0.5 bg-white border border-[#ddd] border-t-[#aaa] px-[3px]" />
          </div>
        </div>
        <div class="ml-[7px] mt-2.5 w-[199px] h-4 border-t border-l border-[#aaa] flex">
          <div class="flex-1 bg-[linear-gradient(to_bottom,#fffc,#fff0_45%,#0000_55%,#000e),linear-gradient(to_right,#e0481c,#ff0_17%,#00a040_33%,#00a0f0_50%,#1a2080_68%,#e4007f_84%,#e60012)]"></div>
          <div class="w-2 bg-linear-to-b from-white from-50% to-black to-50%"></div>
        </div>
      </div>

      <div class="mt-0.5 bg-[#ececec] rounded-sm flex-1 min-h-0 flex flex-col">
        <div class="h-[26px] shrink-0 flex items-end pl-1.5 relative rounded-t-sm bg-linear-to-b from-[#e6e6e6] to-[#c6c6c6] border-b border-[#a5a5a5]">
          <button class="w-[45px] h-[18px] -mb-px pt-0.5 flex items-center justify-center gap-1 rounded-t-md border border-b-0 border-[#909090] bg-[#ececec]">图层<svg class="w-2 h-2"><use href="#close" /></svg></button>
          <button class="w-[37px] h-[17px] pt-0.5 flex items-center justify-center rounded-t-md border border-b-0 border-[#909090] bg-[#d0d0d0]">通道</button>
          <button class="w-[37px] h-[17px] pt-0.5 flex items-center justify-center rounded-t-md border border-b-0 border-[#909090] bg-[#d0d0d0]">路径</button>
          <svg class="absolute right-4 top-1.5 w-2 h-2 stroke-[#666]" viewBox="0 0 8 8"><path d="M0 2H8" stroke-width="1.500" /></svg>
          <svg class="absolute right-[3px] top-[3px] w-2 h-2"><use href="#close" /></svg>
          <svg class="absolute right-0 -bottom-px w-6 h-3"><use href="#panel-menu" /></svg>
        </div>
        <div class="h-7 shrink-0 flex items-center mx-0.5 pl-0.5 border-b border-[#aaa] text-[#9b9b9b] whitespace-nowrap">
          <div class="relative">
            <select aria-label="混合模式" class="appearance-none w-[92px] h-[22px] bg-white border border-[#bbb] rounded-sm px-1.5 text-[#666]"><option>正常</option></select>
            <svg class="absolute right-1 top-[9px] w-[7px] h-1 fill-[#aaa] pointer-events-none"><use href="#tri-down" /></svg>
          </div>
          <label for="opacity" class="ml-[3px] w-[54px]">不透明度:</label>
          <input id="opacity" value="100%" class="w-10 h-[19px] border border-[#aaa] px-1 text-[#777] font-['Roboto',sans-serif]" />
          <button aria-label="不透明度滑块" class="w-[17px] h-[19px] border border-l-0 border-[#aaa] flex items-center justify-center"><svg class="w-[3px] h-1.5 fill-[#777]" viewBox="0 0 4 8"><use href="#tri-right" /></svg></button>
        </div>
        <div class="h-[27px] shrink-0 flex items-center mx-0.5 pl-1.5 border-b border-[#888] text-[#9b9b9b] whitespace-nowrap">
          <span class="w-[34px]">锁定:</span>
          <button aria-label="锁定透明像素" class="w-[17px]"><svg class="w-[11px] h-[11px]" viewBox="0 0 11 11"><rect x=".5" y=".5" width="10" height="10" fill="#fff" stroke="#888" /><path d="M1 1H4V4H1ZM7 1H10V4H7ZM4 4H7V7H4ZM1 7H4V10H1ZM7 7H10V10H7Z" fill="#d5d5d5" /></svg></button>
          <button aria-label="锁定图像像素" class="w-[17px]"><svg class="w-3 h-3 opacity-80"><use href="#brush" /></svg></button>
          <button aria-label="锁定位置" class="w-[18px]"><svg class="w-3 h-3" viewBox="0 0 12 12"><path d="M6 1V11M1 6H11" stroke="#555" /><path d="M4 2.500L6 0L8 2.500ZM4 9.500L6 12L8 9.500ZM2.500 4L0 6L2.500 8ZM9.500 4L12 6L9.500 8Z" fill="#555" /></svg></button>
          <button aria-label="锁定全部" class="text-[#666]"><svg class="w-2.5 h-3"><use href="#lock" /></svg></button>
          <label for="fill" class="ml-[19px] w-[30px]">填充:</label>
          <input id="fill" value="100%" class="w-10 h-[19px] border border-[#aaa] px-1 text-[#777] font-['Roboto',sans-serif]" />
          <button aria-label="填充滑块" class="w-[17px] h-[19px] border border-l-0 border-[#aaa] flex items-center justify-center"><svg class="w-[3px] h-1.5 fill-[#777]" viewBox="0 0 4 8"><use href="#tri-right" /></svg></button>
        </div>
        <div class="flex-1 min-h-0 flex mx-0.5">
          <div class="flex-1">
            <div class="h-[26px] flex border-b border-[#aaa]">
              <button aria-label="图层可见性" class="w-[23px] border-r border-[#aaa] flex items-center justify-center"><svg class="w-3.5 h-2.5" viewBox="0 0 14 10"><path d="M1 6Q7 0 13 5Q7 11 1 6Z" fill="#fff" stroke="#222" /><circle cx="7" cy="5.500" r="2.500" /><path d="M1 3Q7 -1 13 3" fill="none" stroke="#222" stroke-width="1.500" /></svg></button>
              <div class="flex-1 bg-[#3399ff] flex items-center pl-[3px] pr-[15px] text-white italic">
                <div class="w-8 h-[19px] bg-white border border-black"></div>
                <span class="ml-2 mr-auto text-[12px]">背景</span>
                <svg class="w-2.5 h-3 text-black"><use href="#lock" /></svg>
              </div>
            </div>
          </div>
          <div class="w-[15px] bg-[#f0f0f0] border-l border-white flex flex-col items-center justify-between pt-[7px] pb-1.5">
            <svg class="w-[7px] h-1 fill-[#777]"><use href="#tri-up" /></svg>
            <svg class="w-[7px] h-1 fill-[#777]"><use href="#tri-down" /></svg>
          </div>
        </div>
        <div class="h-5 shrink-0 mx-0.5 flex items-center justify-end gap-3.5 border-t border-[#888] pb-1">
          <button aria-label="链接图层"><svg class="w-[18px] h-2.5" viewBox="0 0 18 10"><rect x="1" y="2" width="9" height="6" rx="3" fill="none" stroke="#555" stroke-width="1.500" /><rect x="8" y="2" width="9" height="6" rx="3" fill="none" stroke="#555" stroke-width="1.500" /><path d="M6 5H12" stroke="#555" /></svg></button>
          <button aria-label="图层样式" class="-ml-1 text-[16px] leading-3 italic text-[#555] font-['Liberation_Serif',serif]">fx.</button>
          <button aria-label="图层蒙版" class="-ml-1"><svg class="w-3.5 h-3" viewBox="0 0 14 12"><rect x=".5" y=".5" width="13" height="11" fill="#aaa" stroke="#555" /><circle cx="7" cy="6" r="3.500" fill="#fff" stroke="#555" /></svg></button>
          <button aria-label="调整图层"><svg class="w-4 h-3" viewBox="0 0 16 12"><circle cx="6" cy="6" r="5.500" fill="#fff" stroke="#333" /><path d="M2 10A5.500 5.500 0 0 1 10 2Z" fill="#222" /><path d="M13 10H16L14.500 12Z" /></svg></button>
          <button aria-label="新建组" class="-ml-1"><svg class="w-3 h-2.5" viewBox="0 0 12 10"><path d="M.5 9.500V1.500H4L5 2.500H10.500V9.500Z" fill="#eee" stroke="#777" /><path d="M11 3V9.500H1" fill="none" stroke="#222" /></svg></button>
          <button aria-label="新建图层"><svg class="w-2.5 h-2.5" viewBox="0 0 10 10"><rect x=".5" y=".5" width="9" height="9" fill="#f6f6f6" stroke="#777" /><path d="M9.500 0V9.500H0M1 4H6V9" fill="none" stroke="#222" stroke-width="1.500" /></svg></button>
          <button aria-label="删除图层" class="mr-1"><svg class="w-2.5 h-3" viewBox="0 0 10 12"><path d="M1 3H9M3.500 2Q5 0 6.500 2M2 4L2.500 11H7.500L8 4M4 5V10M6 5V10" fill="none" stroke="#444" /></svg></button>
          <svg class="w-2.5 h-2.5" viewBox="0 0 10 10"><path d="M9 1V10M7 3V10M5 5V10M3 7V10M1 9V10" stroke="#777" stroke-dasharray="1 1" /></svg>
        </div>
      </div>
    </aside>
  </main>

  <!-- top edge of the taskbar -->
  <footer class="h-2 shrink-0 flex border-t border-[#2b2018] bg-linear-to-r from-[#7d6249] via-[#5d4632] to-[#49382a] overflow-hidden">
    <div class="ml-3 w-[30px] h-[30px] shrink-0 rounded-full bg-linear-to-b from-[#c8d8e4] to-[#5f89ad] border border-[#23394e]"></div>
    <div class="ml-[18px] w-[158px] border-x border-t border-[#eee] bg-linear-to-r from-[#ddd2c4] to-[#bba48c]"><div class="ml-3 mt-px size-6 rounded-full bg-[#2790e8]"></div></div>
    <div class="ml-[3px] w-[158px] border-x border-t border-white bg-linear-to-r from-[#f4efe8] to-[#e4d8cb]"><div class="ml-2.5 mt-px w-7 h-5 bg-[#2a66b4]"></div></div>
    <div class="ml-3.5 mt-px size-7 rounded-full bg-[#84b135]"></div>
    <div class="ml-6 w-[158px] border-x border-t border-[#ccc] bg-linear-to-r from-[#b7aa9c] to-[#665a4d]"></div>
    <div class="ml-auto w-3.5 border border-[#bbb] bg-[#8a7d72]"></div>
  </footer>

  <!-- desktop meter -->
  <div class="absolute right-2 top-[810px] w-[10px] h-[60px] rounded-l bg-[#3c4250] flex flex-col justify-end pb-1.5 pl-1">
    <div class="w-1 h-[18px] bg-[repeating-linear-gradient(to_bottom,#7fe08a_0_2px,#3c4250_2px_3px)]"></div>
  </div>

  <!-- input method bar -->
  <div class="absolute left-[1578px] top-[918px]">
    <svg class="w-[206px] h-[26px]" viewBox="0 0 206 26">
      <rect x="12" y="2.500" width="192" height="22" fill="#fff" stroke="#aaa" />
      <rect x="1" y="2" width="24" height="22" rx="4" fill="#e8501c" transform="rotate(-8 13 13)" />
      <path d="M20 8Q13 5 8 8Q5 12 12 13Q20 14 17 18Q11 21 5 17" fill="none" stroke="#fff" stroke-width="3.500" />
      <g fill="#1d6dbd">
        <text x="31" y="20" font-size="16" font-weight="bold" font-family="Noto Sans CJK SC">中</text>
        <path d="M65 7Q71 14 65 19Q58 23 54 16Q64 18 65 7Z" />
        <circle cx="79" cy="11" r="2" fill="none" stroke="#1d6dbd" stroke-width="1.500" /><path d="M84 14H88V17L85 21H83.500L85 17.500H84Z" />
        <rect x="102" y="6" width="6" height="10" rx="3" /><path d="M99.500 12Q99.500 17.500 105 17.500Q110.500 17.500 110.500 12M105 17.500V20.500M102 21H108" fill="none" stroke="#1d6dbd" stroke-width="1.500" />
        <rect x="119" y="7" width="16" height="13" rx="1.500" />
        <circle cx="150" cy="9.500" r="3" /><path d="M144 20Q145 14 150 13.500Q154 14 156 20Z" />
        <path d="M164 11L168 7Q171 10 174 7L178 11L176 14H174V21H167.500V14H166Z" />
        <path d="M186 7H192V13H186ZM186 15H192V21H186ZM194 15H200V21H194Z" /><rect x="194.500" y="7.500" width="5" height="5" fill="none" stroke="#1d6dbd" />
      </g>
      <path d="M121 10.500H133M121 13.500H133" stroke="#fff" stroke-width="1.800" stroke-dasharray="2 1" /><path d="M123 17H131" stroke="#fff" stroke-width="1.500" />
      <text x="153" y="22" font-size="9" font-weight="bold" fill="#1d6dbd" stroke="#fff" stroke-width="2" paint-order="stroke" font-family="Liberation Sans">32</text>
    </svg>
  </div>

  <!-- watermark -->
  <svg class="absolute left-[1480px] top-[844px] w-[360px] h-[176px] pointer-events-none opacity-75 drop-shadow-[0_0_2px_#0008]" viewBox="0 0 360 176" fill="#fff">
    <mask id="cut">
      <rect width="360" height="176" fill="#fff" />
      <text x="146" y="104" font-size="50" font-weight="bold" fill="#000" font-family="Liberation Sans">du</text>
    </mask>
    <text x="4" y="112" font-size="78" font-weight="bold" stroke="#fff" stroke-width="2" font-family="Liberation Sans">Bai</text>
    <ellipse cx="137" cy="48" rx="13" ry="17" />
    <ellipse cx="161" cy="24" rx="12" ry="17" />
    <ellipse cx="193" cy="25" rx="13" ry="17" transform="rotate(8 193 25)" />
    <ellipse cx="211" cy="55" rx="13" ry="17" />
    <path mask="url(#cut)" d="M158 59Q174 43 190 59Q196 75 208 84Q222 96 214 108Q205 118 188 114Q174 111 158 114Q136 117 132 105Q129 92 142 81Q153 73 158 59Z" />
    <text x="228" y="109" font-size="60" font-weight="900" font-family="Noto Sans CJK SC">经验</text>
    <text x="8" y="158" font-size="40" font-family="Noto Sans">jingyan.baidu.com</text>
  </svg>
</body>
</html>
